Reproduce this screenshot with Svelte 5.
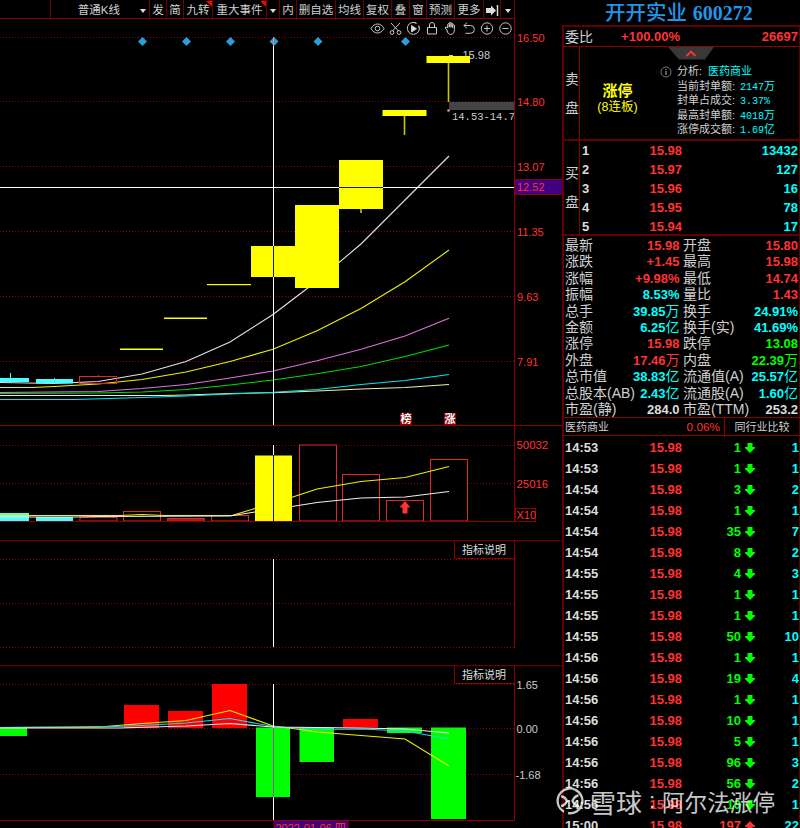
<script>
    const diamonds = [142.5, 186.5, 230.5, 274, 318, 405.5];

    const priceGrid = [
        { y: 37.5, label: '16.50' },
        { y: 101.5, label: '14.80' },
        { y: 166.5, label: '13.07' },
        { y: 231.5, label: '11.35' },
        { y: 296.5, label: '9.63' },
        { y: 361.5, label: '7.91' }
    ];

    const priceLines = [
        { color: '#f0f0a8', points: '0,395.5 163,395.5 186,395 230,393.5 273,392.7 317,391 361,389 405,387.5 449,384.5' },
        { color: '#00e8f4', points: '0,399.5 75,399.5 142,397.5 186,396 230,394 273,392.3 317,389.5 361,384.5 405,380.5 449,374.5' },
        { color: '#00dc00', points: '0,393.5 98,393 142,392 186,389.5 230,385 273,380 317,373.7 361,366.5 405,356.5 449,345' },
        { color: '#e070e0', points: '0,392.5 98,391.5 142,388.5 186,384.5 230,378 273,371 317,360.7 361,349.3 405,336 449,318.3' },
        { color: '#f0f000', points: '0,387.5 32,387.5 54,386.5 98,384 142,379.5 186,372 230,361.5 273,349.3 317,330.7 361,308.5 405,281.7 449,250' },
        { color: '#e4e4e4', points: '0,382.5 54,383.5 76,382.5 98,381.5 142,374 186,361.5 230,342 273,314.5 317,281 361,244 405,200 449,156' }
    ];

    const candles = [
        { x: 120, y: 348.5, w: 43, h: 1.5 },
        { x: 164, y: 317.5, w: 43, h: 1.5 },
        { x: 207, y: 284, w: 44, h: 1.2 },
        { x: 251, y: 246, w: 44, h: 31 },
        { x: 295, y: 205, w: 44, h: 83 },
        { x: 339, y: 160, w: 44, h: 49, wick: 213 },
        { x: 382.5, y: 110, w: 44, h: 6, wick: 135 },
        { x: 426.5, y: 56, w: 43.5, h: 7, wick: 102 }
    ];

    const volumeBars = [
        { x: 80, y: 517.5 },
        { x: 123.5, y: 511.5 },
        { x: 167.5, y: 518.5 },
        { x: 211.5, y: 515.5 },
        { x: 299.5, y: 445 },
        { x: 342.5, y: 474.5 },
        { x: 386.5, y: 500.5 },
        { x: 430.5, y: 459.5 }
    ];

    const macdBars = [
        { x: 0, y: 728, w: 27, h: 8, up: false },
        { x: 124, y: 705, w: 35, h: 23, up: true },
        { x: 168, y: 711, w: 35, h: 17, up: true },
        { x: 212, y: 684, w: 35, h: 44, up: true },
        { x: 256, y: 727.5, w: 34, h: 69.5, up: false },
        { x: 299.5, y: 727.5, w: 34.5, h: 34.5, up: false },
        { x: 343, y: 719, w: 35, h: 8.5, up: true },
        { x: 387, y: 727.5, w: 35, h: 5.5, up: false },
        { x: 431, y: 727.5, w: 35, h: 91.5, up: false }
    ];

    const analysis = [
        ['当前封单额', '2147', '万'],
        ['封单占成交', '3.37%', ''],
        ['最高封单额', '4018', '万'],
        ['涨停成交额', '1.69', '亿']
    ];

    const bids = [
        ['15.98', 13432],
        ['15.97', 127],
        ['15.96', 16],
        ['15.95', 78],
        ['15.94', 17]
    ];

    // label, number, unit, tone
    const stats = [
        ['最新', '15.98', '', 'red', '开盘', '15.80', '', 'red'],
        ['涨跌', '+1.45', '', 'red', '最高', '15.98', '', 'red'],
        ['涨幅', '+9.98%', '', 'red', '最低', '14.74', '', 'red'],
        ['振幅', '8.53%', '', 'cyan', '量比', '1.43', '', 'red'],
        ['总手', '39.85', '万', 'cyan', '换手', '24.91%', '', 'cyan'],
        ['金额', '6.25', '亿', 'cyan', '换手(实)', '41.69%', '', 'cyan'],
        ['涨停', '15.98', '', 'red', '跌停', '13.08', '', 'green'],
        ['外盘', '17.46', '万', 'red', '内盘', '22.39', '万', 'green'],
        ['总市值', '38.83', '亿', 'cyan', '流通值(A)', '25.57', '亿', 'cyan'],
        ['总股本(AB)', '2.43', '亿', 'cyan', '流通股(A)', '1.60', '亿', 'cyan'],
        ['市盈(静)', '284.0', '', 'white', '市盈(TTM)', '253.2', '', 'white']
    ];

    const ticks = [
        ['14:53', 1, 1],
        ['14:53', 1, 1],
        ['14:54', 3, 2],
        ['14:54', 1, 1],
        ['14:54', 35, 7],
        ['14:54', 8, 2],
        ['14:55', 4, 3],
        ['14:55', 1, 1],
        ['14:55', 1, 1],
        ['14:55', 50, 10],
        ['14:56', 1, 1],
        ['14:56', 19, 4],
        ['14:56', 1, 1],
        ['14:56', 10, 1],
        ['14:56', 5, 1],
        ['14:56', 96, 3],
        ['14:56', 56, 2],
        ['14:56', 10, 1],
        ['15:00', 197, 22, true]
    ];
</script>

<div class="terminal">
    <div class="charts">
        <div class="toolbar">
            <span></span>
            <span class="period">普通K线 <i class="caret"></i></span>
            <span>发</span>
            <span>简</span>
            <span class="hot">九转</span>
            <span class="hot">重大事件</span>
            <span><i class="caret"></i></span>
            <span>内</span>
            <span>删自选</span>
            <span>均线</span>
            <span>复权</span>
            <span>叠</span>
            <span>窗</span>
            <span>预测</span>
            <span>更多</span>
            <span>
                <svg width="13" height="11" viewBox="0 0 13 11">
                    <path d="M0 3h5V0.5l5 5-5 5V8H0z" fill="#ddd" />
                    <path d="M11.5 0v11" stroke="#ddd" stroke-width="1.5" />
                </svg>
            </span>
            <span><i class="caret"></i></span>
        </div>

        <!-- price -->
        <svg class="panel" width="563" height="407" viewBox="0 19 563 407">
            {#each priceGrid as g}
                <line class="grid" x1="0" x2="514" y1={g.y} y2={g.y} />
                <text class="axis" x="517" y={g.y + 4.5}>{g.label}</text>
            {/each}

            {#each priceLines as l}
                <polyline points={l.points} stroke={l.color} />
            {/each}

            <rect x="0" y="378" width="29" height="4" fill="#4ff" />
            <rect x="10" y="373" width="1" height="10" fill="#4ff" />
            <rect x="36" y="379" width="37" height="4.5" fill="#4ff" />
            <rect x="54" y="378" width="1" height="2" fill="#4ff" />
            <rect x="79.5" y="376.5" width="37" height="7" class="outline" />
            <path d="M98.5 375v2" class="outline" />

            <rect x="449" y="102" width="65" height="8" fill="#444" />
            <circle cx="448.5" cy="110.5" r="1.2" fill="#ccc" stroke="#a33" stroke-width="0.8" />
            <text class="light" x="462.5" y="59">15.98</text>
            <path d="M449 55.5h4" stroke="#ccc" />
            <svg x="449" y="105" width="65" height="22">
                <text class="gap" x="3" y="15">14.53-14.74</text>
            </svg>

            {#each candles as c}
                {#if c.wick}
                    <line x1={c.x + 22} x2={c.x + 22} y1={c.y} y2={c.wick} stroke="#c8c800" stroke-width="1.6" />
                {/if}
                <rect x={c.x} y={c.y} width={c.w} height={c.h} fill="#ff0" />
            {/each}

            <line class="cross" x1="0" x2="514" y1="187.5" y2="187.5" />
            <line class="cross" x1="273.5" x2="273.5" y1="37" y2="425" />
            <path d="M339 187.5h44M273.5 246v31" stroke="#1010a0" />

            {#each diamonds as x}
                <path d="M{x - 4.5} 41.5l4.5-4.5 4.5 4.5-4.5 4.5z" fill="#2a9fd6" />
            {/each}
            <path d="M273.5 37v9" stroke="#d88" />

            <g class="tools">
                <path d="M371 28.5c3-6 10-6 13 0c-3 6-10 6-13 0z" />
                <circle cx="377.5" cy="28.5" r="2.3" />
                <path d="M391 23l7.5 8M400 23l-7.5 8" />
                <circle cx="392" cy="32.5" r="1.9" />
                <circle cx="399" cy="32.5" r="1.9" />
                <path d="M416.5 23.3A6 6 0 1 0 419 26.5M412.5 22.6a6 6 0 0 1 4 .7M419.5 29.5a6 6 0 0 0-1-4" />
                <path d="M411.5 25.5v6.5l5-3.2z" fill="#ddd" />
                <path d="M427.5 27.5h9v6.5h-9zM429.5 27.5v-2.5a2.5 2.5 0 0 1 5 0v2.5" />
                <path d="M447.5 31l-2.2-3q-.3-1.6 1.4-.8l1 1v-4q.8-1.3 1.6 0v3v-4.3q.9-1.2 1.7 0v4.3v-3.8q.9-1 1.7 0v4.3v-2.5q.9-1 1.7 0v4.3q0 5-4 5q-2.200 0-3.500-3.500z" />
                <path d="M467 22.5l-3 3l3 3M464 25.5h6.5a3.9 3.9 0 0 1 0 7.8h-5" />
                <circle cx="487" cy="28.5" r="5.7" />
                <path d="M484 28.5h6M487 25.5v6" />
                <circle cx="505.5" cy="28.5" r="5.7" />
                <path d="M502.5 28.5h6" />
            </g>

            <rect x="400" y="413" width="12" height="12" fill="#8b0000" />
            <text class="badge" x="406" y="423">榜</text>
            <rect x="444" y="413" width="12" height="12" fill="#8b0000" />
            <text class="badge" x="450" y="423">涨</text>

            <path class="frame" d="M514.5 19v407M0 425.5h563" />
            <rect x="515" y="179.5" width="48" height="15" fill="#400080" stroke="#8b0000" />
            <text class="axis" x="517" y="191">12.52</text>
        </svg>

        <!-- volume -->
        <svg class="panel" width="563" height="114" viewBox="0 426 563 114">
            <path class="grid" d="M0 445.5H514M0 483.5H514" />
            <text class="axis wide" x="516.5" y="449">50032</text>
            <text class="axis wide" x="516.5" y="487.5">25016</text>
            <rect x="0" y="513" width="29" height="8" fill="#4ff" />
            <rect x="36" y="517" width="37" height="4" fill="#4ff" />
            {#each volumeBars as b}
                <rect x={b.x} y={b.y} width="37" height={521 - b.y} class="outline hollow" />
            {/each}
            <rect x="167.5" y="519" width="37" height="2" fill="#a02020" />
            <polyline points="0,515.5 120,515.5 142,514.5 165,515.5 232,515.5 255,508.5 292,497.3 317,489 361,481.5 405,477.5 449,466.5" stroke="#f0f000" />
            <polyline points="0,517 75,517 98,516.5 230,516 255,512 292,506.5 317,502.5 361,498 405,497 449,491.5" stroke="#eee" />
            <path d="M405 501l5.5 6.5h-3v6h-5v-6h-3z" fill="#f33" />
            <line class="cross" x1="273.5" x2="273.5" y1="445" y2="455" />
            <rect x="255" y="455.5" width="37" height="66" fill="#ff0" />
            <line x1="273.5" x2="273.5" y1="455" y2="521" stroke="#1010a0" />
            <path class="frame" d="M514.5 426V521.5M0 521.5H514.5" />
            <rect x="515.5" y="508.5" width="20" height="13" class="frame" />
            <text class="axis" x="516.5" y="518.5">X10</text>
        </svg>

        <!-- empty indicator -->
        <svg class="panel" width="563" height="125" viewBox="0 540 563 125">
            <path class="grid" d="M0 559.5H514M0 603.5H514M0 647.5H514" />
            <line class="cross" x1="273.5" x2="273.5" y1="559" y2="647" />
            <path class="rule" d="M0 540.5H563" />
            <path class="frame" d="M514.5 540V648M454.5 541V558.5H514" />
            <text class="note" x="462" y="554">指标说明</text>
        </svg>

        <!-- macd -->
        <svg class="panel" width="563" height="163" viewBox="0 665 563 163">
            <path class="grid" d="M0 684.5H514M0 728.5H514M0 774.5H514" />
            {#each macdBars as b}
                <rect x={b.x} y={b.y} width={b.w} height={b.h} fill={b.up ? '#f00' : '#0f0'} />
            {/each}
            <polyline points="0,727.5 75,727 105,726.5 136,724 186,720.5 230,710.5 273,726 300,729.5 317,732 361,735.5 405,739 449,766" stroke="#f0f000" />
            <polyline points="0,727.5 100,727 142,725.5 186,723 230,718.5 273,726.5 317,729.5 361,729 405,731 449,739" stroke="#20d8e8" />
            <polyline points="0,728 120,728 186,726 230,723.5 273,727 361,728 405,729 449,733" stroke="#f4e8f0" />
            <line class="cross" x1="273.5" x2="273.5" y1="684" y2="820" />
            <line x1="273.5" x2="273.5" y1="728" y2="797" stroke="#a050a0" />
            <path class="rule" d="M0 665.5H563" />
            <path class="frame" d="M514.5 665V820.5M0 820.5H514.5M454.5 666V683.5H514" />
            <text class="note" x="462" y="679">指标说明</text>
            <text class="light" x="516.5" y="688.5">1.65</text>
            <text class="light" x="516.5" y="733">0.00</text>
            <text class="light" x="515.5" y="779">-1.68</text>
            <rect x="274" y="820.5" width="74" height="12" fill="#400080" stroke="#8b0000" />
            <text class="axis" x="275.5" y="832">2022-01-06 四</text>
        </svg>
    </div>

    <div class="quote">
        <h1>开开实业 <b>600272</b></h1>

        <div class="ratio">
            <span>委比</span>
            <b class="red">+100.00%</b>
            <b class="red">26697</b>
        </div>

        <div class="sell">
            <div class="side"><span>卖</span><span>盘</span></div>
            <div class="limit">
                <strong>涨停</strong>
                <span>(8连板)</span>
            </div>
            <div class="analysis">
                <svg class="pull" width="46" height="13" viewBox="0 0 46 13">
                    <path d="M0 0h46l-9 12.5H11z" fill="#383838" />
                    <path d="M18.5 9l4.5-4.5 4.5 4.5" fill="none" stroke="#f33" stroke-width="1.8" />
                </svg>
                <svg class="info" width="12" height="12" viewBox="0 0 12 12">
                    <circle cx="6" cy="6" r="5" fill="none" stroke="#777" />
                    <path d="M6 5v4M6 3v1" stroke="#999" stroke-width="1.2" />
                </svg>
                <p class="sector"><span>分析:</span><em>医药商业</em></p>
                {#each analysis as [name, value, unit]}
                    <p><span>{name}:</span><em><code>{value}</code>{unit}</em></p>
                {/each}
            </div>
        </div>

        <div class="buy">
            <div class="side"><span>买</span><span>盘</span></div>
            <div class="bids">
                {#each bids as [price, lots], i}
                    <div class="bid">
                        <span>{i + 1}</span>
                        <span class="red">{price}</span>
                        <span class="cyan">{lots}</span>
                    </div>
                {/each}
            </div>
        </div>

        <div class="stats">
            {#each stats as s}
                <div class="stat">
                    <span>{s[0]}</span>
                    <span class={s[3]}><b>{s[1]}</b>{s[2]}</span>
                    <span>{s[4]}</span>
                    <span class={s[7]}><b>{s[5]}</b>{s[6]}</span>
                </div>
            {/each}
        </div>

        <div class="industry">
            <span>医药商业</span>
            <span class="red">0.06%</span>
            <span class="compare">同行业比较</span>
        </div>

        <div class="ticks">
            {#each ticks as [time, lots, deals, up]}
                <div class="tick">
                    <span>{time}</span>
                    <span class="red">15.98</span>
                    <span class={up ? 'red' : 'green'}>{lots}</span>
                    <svg class:up width="10" height="10" viewBox="0 0 10 10">
                        <path d="M2.5 0h5v4H10v1L5 10 0 5V4h2.5z" fill={up ? '#f33' : '#0f0'} />
                    </svg>
                    <span class="cyan">{deals}</span>
                </div>
            {/each}
        </div>
    </div>

    <div class="watermark">
        <svg width="28" height="28" viewBox="0 0 28 28" fill="none" stroke="#fff" stroke-width="2.4">
            <path d="M12 1.800A12.300 12.300 0 0 0 8 24.700M12 26.100A12.300 12.300 0 0 0 19 2.700" />
            <path d="M11 1.800C14 1 17 1.500 19 2.700M5 9.500q4 0 6 4.500q-2 4.500-6 5M22.500 8.500q-4 .5-6 5.500q2 4.500 6.500 5" />
        </svg>
        <span class="brand">雪球</span><span class="colon">:</span><span>阿尔法涨停</span>
    </div>
</div>

<style>
    :global(body) {
        margin: 0;
        background: #000;
    }

    .terminal {
        position: relative;
        display: flex;
        width: 800px;
        height: 828px;
        overflow: hidden;
        background: #000;
        color: #d0d0d0;
        font-family: 'Liberation Sans', 'Noto Sans CJK SC', sans-serif;
    }

    .charts {
        width: 563px;
        flex: none;
    }

    .toolbar {
        display: grid;
        grid-template-columns: 51px 99px 17px 17px 29px 54px 13px 17px 39px 28px 28px 18px 17px 28px 29px 17px 14px;
        width: 515px;
        height: 19px;
        box-sizing: border-box;
        border-bottom: 1px solid #8b0000;
        font-size: 11.5px;
        line-height: 19px;
    }

    .toolbar span {
        position: relative;
        display: flex;
        align-items: center;
        justify-content: center;
        padding-top: 1px;
        border-right: 1px solid #700000;
        white-space: nowrap;
    }

    .toolbar .period {
        justify-content: flex-end;
        gap: 20px;
        padding-right: 3px;
    }

    .hot::after {
        content: '';
        position: absolute;
        top: 1px;
        right: 0;
        border-top: 6px solid #f00;
        border-left: 6px solid transparent;
    }

    .caret {
        border: 3.5px solid transparent;
        border-top: 4px solid #ddd;
        border-bottom: 0;
    }

    .panel {
        display: block;
    }

    .panel polyline {
        fill: none;
        stroke-width: 1.1;
    }

    .grid {
        stroke: #900000;
        stroke-dasharray: 1 2;
    }

    .frame {
        fill: none;
        stroke: #8b0000;
    }

    .rule {
        stroke: #680000;
        stroke-width: 1.5;
    }

    .outline {
        fill: none;
        stroke: #e02828;
    }

    .hollow {
        fill: #000;
    }

    .cross {
        stroke: #fff;
    }

    .axis {
        fill: #f33;
        font-size: 11px;
    }

    .wide {
        font-size: 11.4px;
    }

    .light {
        fill: #ccc;
        font-size: 11px;
    }

    .gap {
        fill: #ccc;
        font-family: 'Liberation Mono', monospace;
        font-size: 10.5px;
    }

    .badge {
        fill: #fff;
        font-size: 11px;
        font-weight: bold;
        text-anchor: middle;
    }

    .note {
        fill: #ddd;
        font-size: 11px;
    }

    .tools {
        fill: none;
        stroke: #c8c8c8;
        stroke-width: 1;
    }

    .quote {
        width: 237px;
        display: flex;
        flex-direction: column;
        flex: none;
    }

    h1 {
        margin: 0;
        height: 25px;
        padding-left: 42px;
        color: #2196e8;
        font-size: 20.5px;
        font-weight: 500;
        line-height: 26px;
        white-space: nowrap;
    }

    h1 b {
        font-family: 'Liberation Serif', serif;
        font-size: 20px;
    }

    .red {
        color: #f33;
    }

    .cyan {
        color: #0ff;
    }

    .green {
        color: #0f0;
    }

    .white {
        color: #ddd;
    }

    .ratio,
    .sell,
    .buy,
    .stats,
    .industry,
    .ticks {
        box-sizing: border-box;
        margin-left: -1px;
        padding-left: 1px;
        border-left: 2px solid #600000;
        border-right: 1px solid #600000;
    }

    .ratio {
        display: grid;
        grid-template-columns: 32px 84px 1fr;
        height: 22px;
        border-top: 2px solid #600000;
        border-bottom: 1px solid #8b0000;
        line-height: 20px;
        font-size: 13px;
    }

    .ratio span {
        font-size: 14px;
    }

    .ratio b {
        text-align: right;
        padding-right: 1px;
    }

    .sell,
    .buy {
        display: flex;
        height: 95px;
        border-bottom: 2px solid #600000;
    }

    .sell {
        height: 94px;
    }

    .side {
        width: 14px;
        display: flex;
        flex-direction: column;
        justify-content: center;
        gap: 9px;
        padding-top: 2px;
        border-right: 1px solid #8b0000;
        font-size: 13.5px;
        line-height: 20px;
        text-align: center;
    }

    .limit {
        width: 75px;
        display: flex;
        flex-direction: column;
        justify-content: center;
        padding-top: 12px;
        box-sizing: border-box;
        color: #ff0;
        line-height: 16px;
        text-align: center;
    }

    .limit strong {
        font-size: 15px;
    }

    .limit span {
        font-size: 12.5px;
    }

    .analysis {
        position: relative;
        flex: 1;
        padding: 17px 0 0 22px;
        font-size: 11px;
    }

    .pull {
        position: absolute;
        left: 13px;
        top: 0;
    }

    .info {
        position: absolute;
        left: 5px;
        top: 19px;
    }

    .analysis p {
        display: flex;
        height: 14.6px;
        margin: 0;
        line-height: 14.6px;
    }

    .analysis p span {
        width: 63px;
    }

    .analysis .sector span {
        width: 31px;
    }

    .analysis em {
        color: #0ff;
        font-style: normal;
    }

    .analysis code {
        font-family: 'Liberation Mono', monospace;
        font-size: 10px;
        line-height: 1;
    }

    .bids {
        flex: 1;
        display: flex;
        flex-direction: column;
    }

    .bid {
        display: grid;
        grid-template-columns: 20px 80px 1fr;
        height: 19.2px;
        padding: 0 1px 0 2px;
        font-size: 13px;
        font-weight: bold;
        line-height: 19px;
        text-align: right;
    }

    .bid span:first-child {
        color: #ddd;
        text-align: left;
    }

    .stats {
        height: 181px;
        padding: 1px 1px 0;
    }

    .stat {
        display: flex;
        height: 16.4px;
        font-size: 14px;
        line-height: 16.4px;
        white-space: nowrap;
    }

    .stat b {
        font-size: 13px;
    }

    .stat span:nth-child(odd) {
        width: 0;
    }

    .stat span:nth-child(2) {
        width: 114.5px;
        margin-right: 3.5px;
        text-align: right;
    }

    .stat span:nth-child(4) {
        flex: 1;
        text-align: right;
    }

    .industry {
        display: grid;
        grid-template-columns: 60px 99px 1fr;
        height: 19px;
        border-top: 1px solid #8b0000;
        border-bottom: 1px solid #8b0000;
        font-size: 11px;
        line-height: 19px;
    }

    .industry .red {
        padding-right: 4px;
        font-size: 11.8px;
        text-align: right;
    }

    .compare {
        border-left: 1px solid #8b0000;
        text-align: center;
    }

    .ticks {
        flex: 1;
        padding-top: 1px;
        overflow: hidden;
    }

    .tick {
        display: grid;
        grid-template-columns: 37px 80px 59px 18px 1fr;
        align-items: center;
        height: 21px;
        font-size: 13px;
        font-weight: bold;
        text-align: right;
    }

    .tick span:first-child {
        color: #ddd;
        text-align: left;
    }

    .tick svg {
        margin: 1px 0 0 4px;
    }

    .tick svg.up {
        transform: rotate(180deg);
    }

    .watermark {
        position: absolute;
        left: 556px;
        top: 787px;
        display: flex;
        align-items: center;
        height: 28px;
        color: #fff;
        font-size: 22.6px;
        opacity: 0.78;
        white-space: nowrap;
    }

    .brand {
        margin-left: 6px;
        font-size: 26px;
    }

    .colon {
        width: 20px;
        text-align: center;
    }
</style>
